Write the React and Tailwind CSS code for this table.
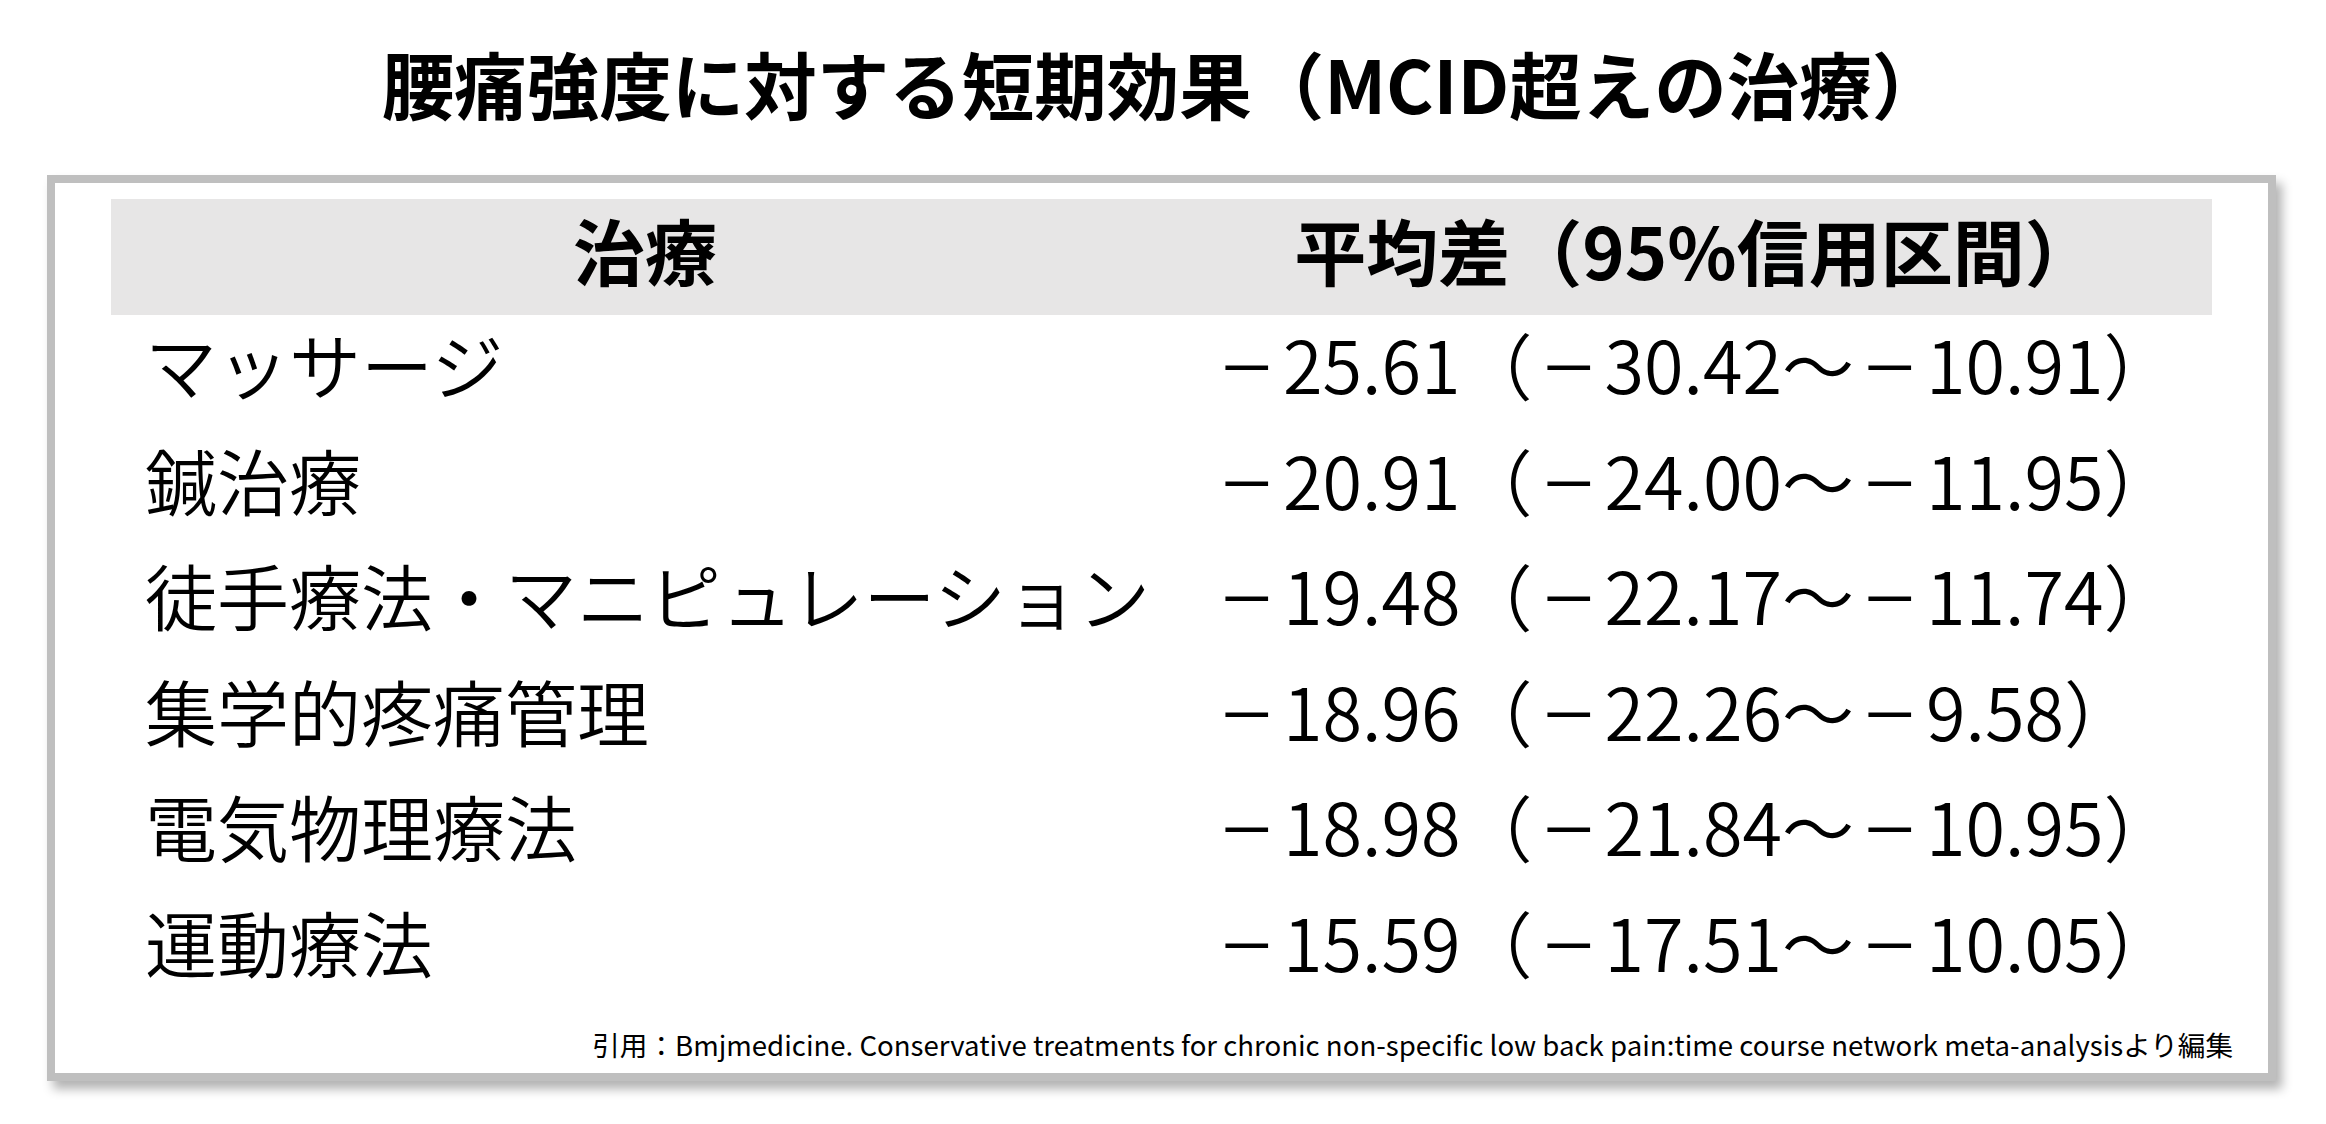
import React from "react";

const rows = [
  { name: "マッサージ", value: ["25.61", "30.42", "10.91"] },
  { name: "鍼治療", value: ["20.91", "24.00", "11.95"] },
  { name: "徒手療法・マニピュレーション", value: ["19.48", "22.17", "11.74"] },
  { name: "集学的疼痛管理", value: ["18.96", "22.26", "9.58"] },
  { name: "電気物理療法", value: ["18.98", "21.84", "10.95"] },
  { name: "運動療法", value: ["15.59", "17.51", "10.05"] },
];

// full-width slot holding a minus bar
const Minus = () => (
  <span className="inline-block w-[1em] text-center">
    <span className="inline-block scale-x-[1.25]">−</span>
  </span>
);

const App = () => {
  return (
    <div
      className="min-h-screen w-full bg-white text-black"
      style={{ fontFamily: '"Noto Sans CJK JP", "Noto Sans", sans-serif' }}
    >
      <h1 className="pt-[31px] text-center text-[72.5px] font-bold leading-[104px]">
        腰痛強度に対する短期効果（MCID超えの治療）
      </h1>

      <div className="ml-[47px] mr-[50px] mt-[40px] border-[8px] border-[#bfbfbf] bg-white shadow-[6px_8px_10px_rgba(0,0,0,0.3)]">
        <div className="mx-[56px] pt-[16px]">
          <div className="grid h-[116px] grid-cols-[1068px_1fr] bg-[#e7e6e6] text-[72px] font-bold leading-[100px]">
            <div className="text-center">治療</div>
            <div className="text-center">平均差（95%信用区間）</div>
          </div>

          {rows.map((row) => (
            <div
              key={row.name}
              className="grid h-[115.5px] grid-cols-[1068px_1fr] text-[72px] font-[350] leading-[95px]"
            >
              <div className="whitespace-nowrap pl-[34px]">{row.name}</div>
              <div className="whitespace-nowrap pl-[32px]">
                <Minus />
                {row.value[0]}（<Minus />
                {row.value[1]}～<Minus />
                {row.value[2]}）
              </div>
            </div>
          ))}
        </div>

        <p className="mt-[17px] pb-[9px] pr-[35px] text-right text-[27.6px] leading-[39px]">
          引用：Bmjmedicine. Conservative treatments for chronic non-specific low back pain:time course network meta-analysisより編集
        </p>
      </div>
    </div>
  );
};

export default App;
